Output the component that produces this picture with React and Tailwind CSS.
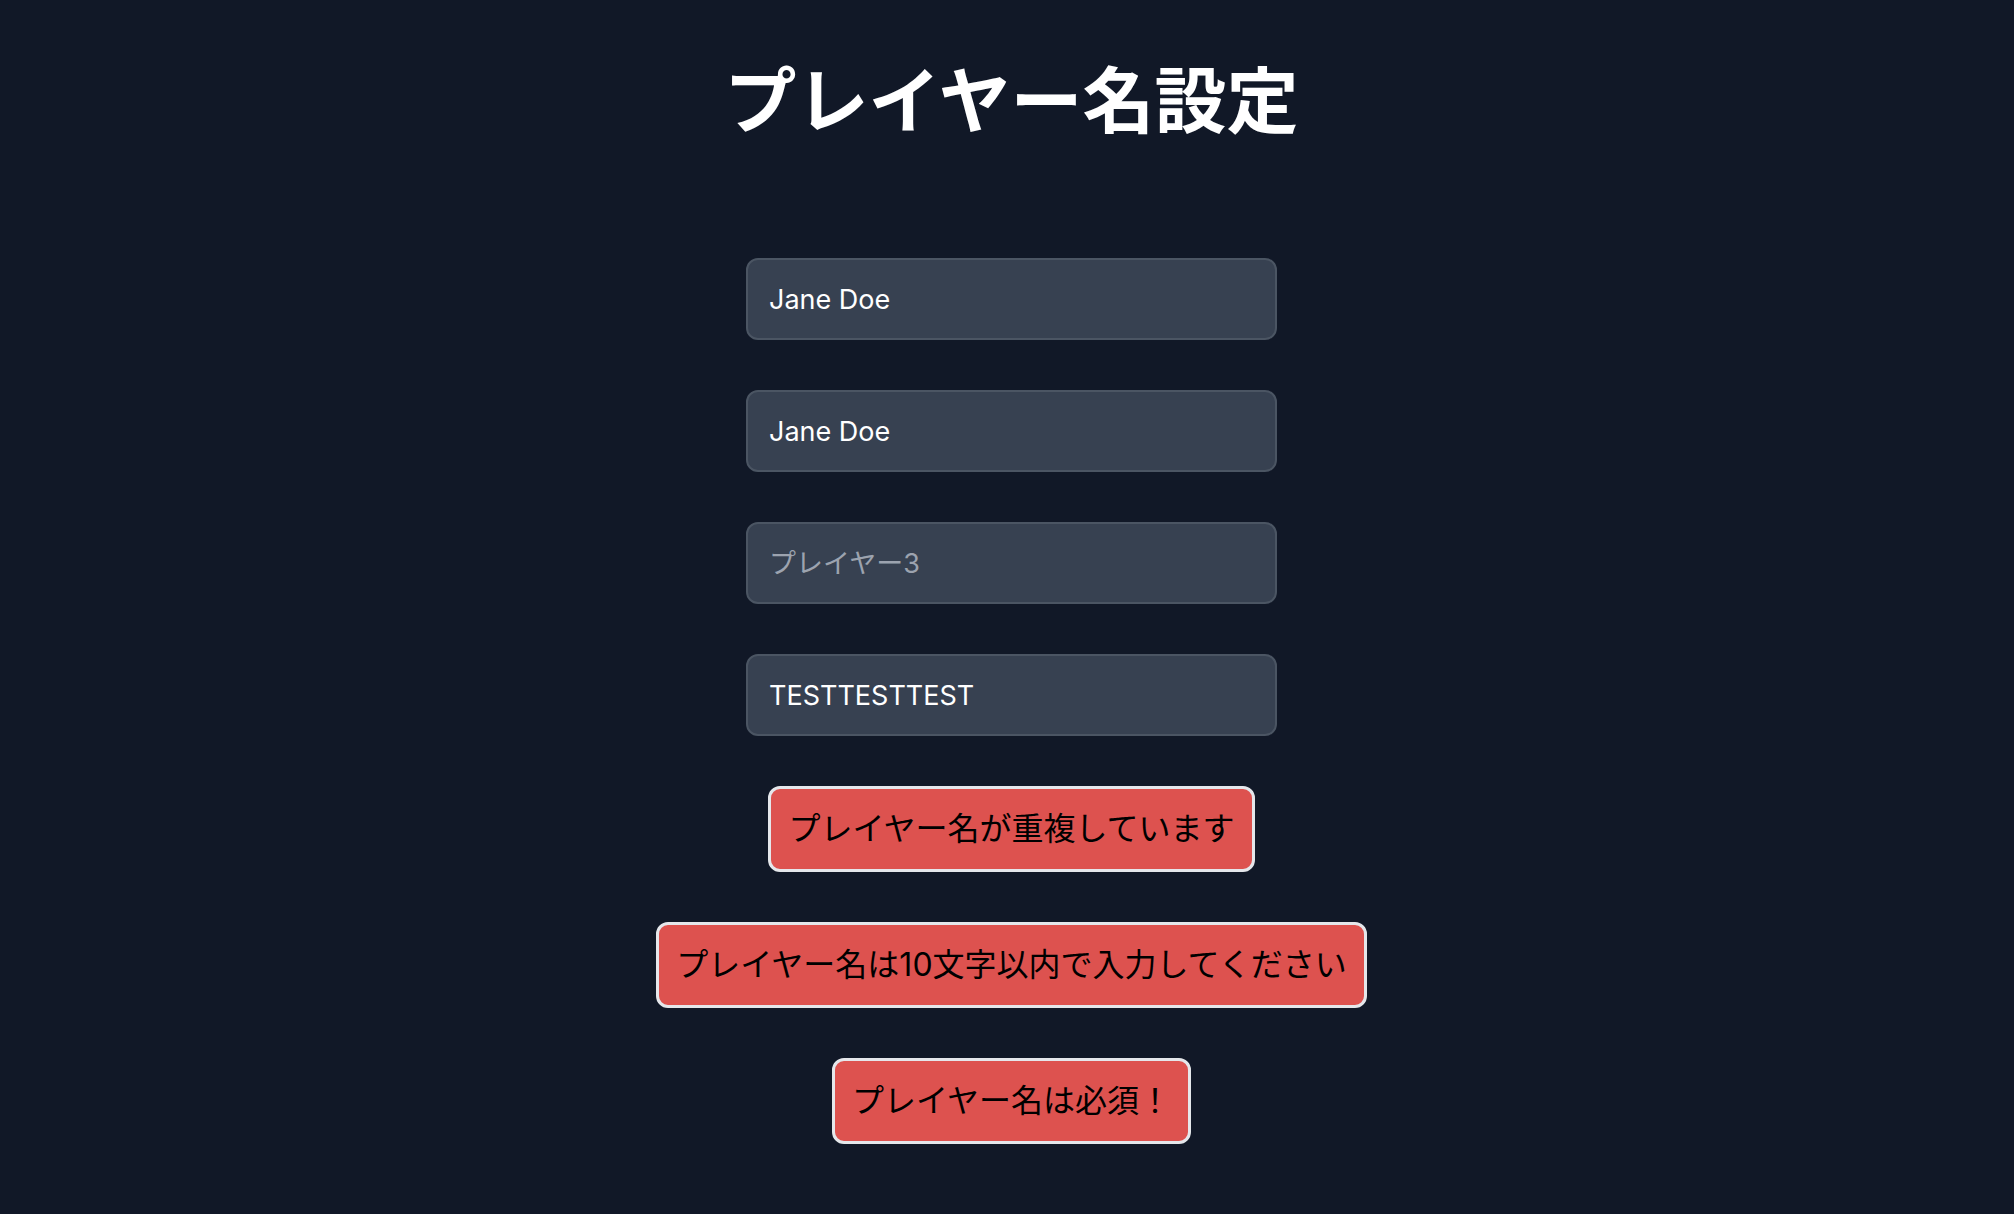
import React from 'react';

const players = [
  { value: 'Jane Doe', placeholder: 'プレイヤー1' },
  { value: 'Jane Doe', placeholder: 'プレイヤー2' },
  { value: '', placeholder: 'プレイヤー3' },
  { value: 'TESTTESTTEST', placeholder: 'プレイヤー4' },
];

const errors = [
  'プレイヤー名が重複しています',
  'プレイヤー名は10文字以内で入力してください',
  'プレイヤー名は必須！',
];

const App = () => {
  return (
    <main
      className="min-h-screen bg-[#111827] flex flex-col items-center pt-[65px] pl-[9px]"
      style={{ fontFamily: 'Inter, "Noto Sans CJK JP", sans-serif' }}
    >
      {/* Title */}
      <h1 className="text-[72px] leading-[72px] font-bold text-white">プレイヤー名設定</h1>

      {/* Name inputs */}
      <div className="mt-[121px] flex flex-col gap-[50px]">
        {players.map((p, i) => (
          <input
            key={i}
            type="text"
            defaultValue={p.value}
            placeholder={p.placeholder}
            className="w-[531px] h-[82px] px-[21px] rounded-xl bg-[#374151] border-2 border-[#4b5563] text-white text-[27px] placeholder:text-[#9ca3af] focus:outline-none"
          />
        ))}
      </div>

      {/* Error messages */}
      <div className="mt-[50px] flex flex-col items-center gap-[50px]">
        {errors.map((msg) => (
          <div
            key={msg}
            className="h-[86px] px-[17px] flex items-center rounded-xl bg-[#dd524f] border-[3px] border-[#e5e7eb] text-black text-[32px] whitespace-nowrap"
          >
            {msg}
          </div>
        ))}
      </div>
    </main>
  );
};

export default App;
